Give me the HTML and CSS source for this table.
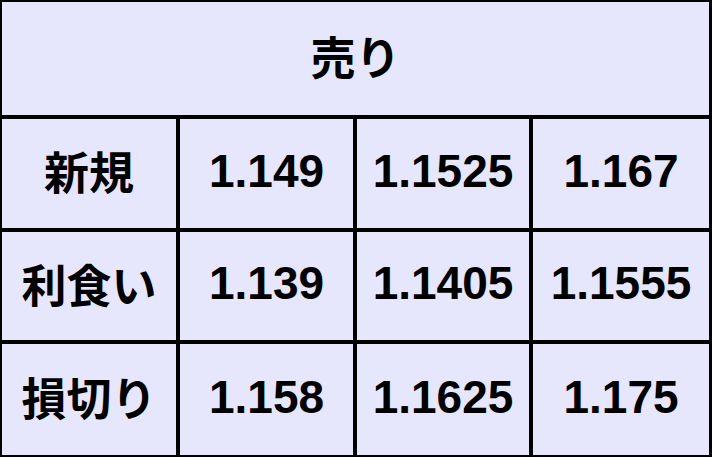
FILE: index.html
```html
<!DOCTYPE html>
<html lang="ja">
<head>
<meta charset="utf-8">
<link rel="stylesheet" href="styles.css">
</head>
<body>
<div class="table">
  <div class="cell head">売り</div>
  <div class="cell label">新規</div>
  <div class="cell num">1.149</div>
  <div class="cell num">1.1525</div>
  <div class="cell num">1.167</div>
  <div class="cell label">利食い</div>
  <div class="cell num">1.139</div>
  <div class="cell num">1.1405</div>
  <div class="cell num">1.1555</div>
  <div class="cell label">損切り</div>
  <div class="cell num">1.158</div>
  <div class="cell num">1.1625</div>
  <div class="cell num">1.175</div>
</div>
</body>
</html>
```
FILE: styles.css
```css
html, body {
  margin: 0;
  padding: 0;
  background: #000;
}
.table {
  width: 712px;
  height: 457px;
  box-sizing: border-box;
  padding: 2px 3px 2px 2px;
  background: #000;
  display: grid;
  grid-template-columns: 174px 173px 172px 176px;
  grid-template-rows: 113px 109px 108px 111px;
  column-gap: 4px;
  row-gap: 4px;
}
.cell {
  background: #e6e6fc;
  display: flex;
  align-items: center;
  justify-content: center;
  color: #000;
  box-sizing: border-box;
  padding-bottom: 6px;
}
.head {
  grid-column: 1 / 5;
}
.head, .label {
  font-family: "Noto Sans CJK JP", sans-serif;
  font-size: 45px;
  font-weight: 600;
}
.num {
  font-family: "Liberation Sans", Arial, sans-serif;
  font-size: 46px;
  font-weight: bold;
}
```
